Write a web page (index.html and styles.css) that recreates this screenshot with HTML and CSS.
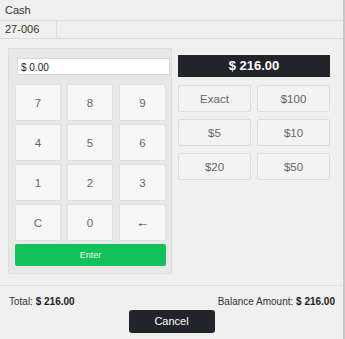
FILE: index.html
```html
<!DOCTYPE html>
<html>
<head>
<meta charset="utf-8">
<link rel="stylesheet" href="styles.css">
</head>
<body>
<div class="frame">
  <div class="title">Cash</div>
  <div class="tabrow"><div class="tab">27-006</div></div>
  <div class="main">
    <div class="pad">
      <div class="inputwrap"><div class="input">$ 0.00</div></div>
      <div class="keys">
        <div class="key">7</div><div class="key">8</div><div class="key">9</div>
        <div class="key">4</div><div class="key">5</div><div class="key">6</div>
        <div class="key">1</div><div class="key">2</div><div class="key">3</div>
        <div class="key">C</div><div class="key">0</div><div class="key arrow">&#8592;</div>
      </div>
      <div class="enter">Enter</div>
    </div>
    <div class="side">
      <div class="amount">$ 216.00</div>
      <div class="quick">
        <div class="qbtn">Exact</div><div class="qbtn">$100</div>
        <div class="qbtn">$5</div><div class="qbtn">$10</div>
        <div class="qbtn">$20</div><div class="qbtn">$50</div>
      </div>
    </div>
  </div>
  <div class="footer">
    <div class="totals">
      <div>Total: <b>$ 216.00</b></div>
      <div>Balance Amount: <b>$ 216.00</b></div>
    </div>
    <div class="actions"><div class="cancel">Cancel</div></div>
  </div>
</div>
</body>
</html>
```
FILE: styles.css
```css
html, body { margin: 0; padding: 0; }
body {
  background: #f0f0f0;
  font-family: "Liberation Sans", Arial, sans-serif;
  font-size: 11px;
  color: #333;
  width: 345px;
  height: 339px;
  overflow: hidden;
}
.frame {
  width: 343px;
  height: 339px;
  border-right: 2px solid #c8c8c8;
  background: #f0f0f0;
}
.title {
  height: 20px;
  line-height: 20px;
  padding-left: 5px;
  border-bottom: 1px solid #dcdcdc;
}
.tabrow {
  height: 17px;
  border-bottom: 1px solid #dcdcdc;
  display: flex;
}
.tab {
  width: 51px;
  padding-left: 5px;
  line-height: 17px;
  border-right: 1px solid #dcdcdc;
}
.main {
  display: flex;
  padding: 9px 0 0 8px;
  height: 247px;
  border-bottom: 1px solid #e0e0e0;
  box-sizing: border-box;
}
.pad {
  width: 164px;
  height: 226px;
  box-sizing: border-box;
  background: #e8e8e8;
  border: 1px solid #dedede;
  padding: 9px 5px 0 6px;
}
.inputwrap { padding-left: 2px; }
.input {
  background: #fff;
  height: 17px;
  line-height: 17px;
  border: 1px solid #d8d8d8;
  box-sizing: border-box;
  padding-left: 3px;
  font-size: 10px;
  color: #222;
  width: 153px;
}
.keys {
  display: grid;
  grid-template-columns: 46px 46px 47px;
  grid-auto-rows: 37px;
  column-gap: 6px;
  row-gap: 3px;
  margin-top: 9px;
  width: 151px;
}
.key {
  background: #f7f7f7;
  border: 1px solid #e0e0e0;
  border-radius: 2px;
  display: flex;
  align-items: center;
  justify-content: center;
  font-size: 11.5px;
  color: #666;
  box-sizing: border-box;
}
.key.arrow { font-size: 13px; color: #333; }
.enter {
  margin-top: 3px;
  width: 151px;
  height: 22px;
  line-height: 22px;
  background: #12c15a;
  border-radius: 2px;
  color: #e8ffe8;
  text-align: center;
  font-size: 9px;
}
.side {
  margin-left: 6px;
  padding-top: 7px;
  width: 152px;
}
.amount {
  background: #212529;
  color: #fff;
  height: 22px;
  line-height: 22px;
  text-align: center;
  font-weight: bold;
  font-size: 13px;
}
.quick {
  display: grid;
  grid-template-columns: 73px 73px;
  column-gap: 6px;
  grid-auto-rows: 27px;
  row-gap: 7px;
  margin-top: 8px;
}
.qbtn {
  background: #f3f3f3;
  border: 1px solid #dcdcdc;
  border-radius: 2px;
  display: flex;
  align-items: center;
  justify-content: center;
  color: #666;
  font-size: 11.5px;
  box-sizing: border-box;
}
.footer {
  padding: 0 8px 0 9px;
}
.totals {
  display: flex;
  justify-content: space-between;
  padding-top: 9px;
  height: 14px;
  line-height: 14px;
  font-size: 10px;
  color: #333;
}
.totals b { color: #222; }
.actions {
  display: flex;
  justify-content: center;
  margin-top: 1px;
  padding-right: 1px;
}
.cancel {
  background: #212529;
  color: #fff;
  width: 86px;
  height: 23px;
  line-height: 23px;
  text-align: center;
  border-radius: 3px;
  font-size: 11px;
}
```
